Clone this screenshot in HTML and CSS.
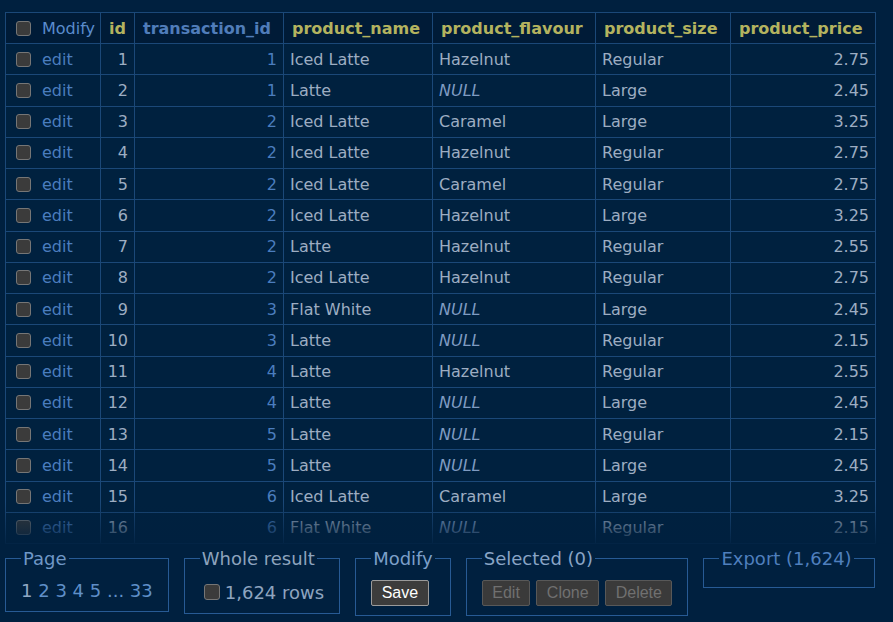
FILE: index.html
```html
<!DOCTYPE html>
<html>
<head>
<meta charset="utf-8">
<link rel="stylesheet" href="styles.css">
</head>
<body>
<div class="page">
  <div class="grid-wrap">
    <table class="grid">
      <colgroup>
        <col class="c-mod"><col class="c-id"><col class="c-tid"><col class="c-name"><col class="c-flav"><col class="c-size"><col class="c-price">
      </colgroup>
      <thead>
        <tr>
          <th class="h-mod"><span class="cb"></span>Modify</th>
          <th class="h-sort">id</th>
          <th class="h-link">transaction_id</th>
          <th class="h-sort">product_name</th>
          <th class="h-sort">product_flavour</th>
          <th class="h-sort">product_size</th>
          <th class="h-sort">product_price</th>
        </tr>
      </thead>
      <tbody>
        <tr><td class="mod"><span class="cb"></span><span class="lnk">edit</span></td><td class="num">1</td><td class="num lnk">1</td><td>Iced Latte</td><td>Hazelnut</td><td>Regular</td><td class="num">2.75</td></tr>
        <tr><td class="mod"><span class="cb"></span><span class="lnk">edit</span></td><td class="num">2</td><td class="num lnk">1</td><td>Latte</td><td class="null">NULL</td><td>Large</td><td class="num">2.45</td></tr>
        <tr><td class="mod"><span class="cb"></span><span class="lnk">edit</span></td><td class="num">3</td><td class="num lnk">2</td><td>Iced Latte</td><td>Caramel</td><td>Large</td><td class="num">3.25</td></tr>
        <tr><td class="mod"><span class="cb"></span><span class="lnk">edit</span></td><td class="num">4</td><td class="num lnk">2</td><td>Iced Latte</td><td>Hazelnut</td><td>Regular</td><td class="num">2.75</td></tr>
        <tr><td class="mod"><span class="cb"></span><span class="lnk">edit</span></td><td class="num">5</td><td class="num lnk">2</td><td>Iced Latte</td><td>Caramel</td><td>Regular</td><td class="num">2.75</td></tr>
        <tr><td class="mod"><span class="cb"></span><span class="lnk">edit</span></td><td class="num">6</td><td class="num lnk">2</td><td>Iced Latte</td><td>Hazelnut</td><td>Large</td><td class="num">3.25</td></tr>
        <tr><td class="mod"><span class="cb"></span><span class="lnk">edit</span></td><td class="num">7</td><td class="num lnk">2</td><td>Latte</td><td>Hazelnut</td><td>Regular</td><td class="num">2.55</td></tr>
        <tr><td class="mod"><span class="cb"></span><span class="lnk">edit</span></td><td class="num">8</td><td class="num lnk">2</td><td>Iced Latte</td><td>Hazelnut</td><td>Regular</td><td class="num">2.75</td></tr>
        <tr><td class="mod"><span class="cb"></span><span class="lnk">edit</span></td><td class="num">9</td><td class="num lnk">3</td><td>Flat White</td><td class="null">NULL</td><td>Large</td><td class="num">2.45</td></tr>
        <tr><td class="mod"><span class="cb"></span><span class="lnk">edit</span></td><td class="num">10</td><td class="num lnk">3</td><td>Latte</td><td class="null">NULL</td><td>Regular</td><td class="num">2.15</td></tr>
        <tr><td class="mod"><span class="cb"></span><span class="lnk">edit</span></td><td class="num">11</td><td class="num lnk">4</td><td>Latte</td><td>Hazelnut</td><td>Regular</td><td class="num">2.55</td></tr>
        <tr><td class="mod"><span class="cb"></span><span class="lnk">edit</span></td><td class="num">12</td><td class="num lnk">4</td><td>Latte</td><td class="null">NULL</td><td>Large</td><td class="num">2.45</td></tr>
        <tr><td class="mod"><span class="cb"></span><span class="lnk">edit</span></td><td class="num">13</td><td class="num lnk">5</td><td>Latte</td><td class="null">NULL</td><td>Regular</td><td class="num">2.15</td></tr>
        <tr><td class="mod"><span class="cb"></span><span class="lnk">edit</span></td><td class="num">14</td><td class="num lnk">5</td><td>Latte</td><td class="null">NULL</td><td>Large</td><td class="num">2.45</td></tr>
        <tr><td class="mod"><span class="cb"></span><span class="lnk">edit</span></td><td class="num">15</td><td class="num lnk">6</td><td>Iced Latte</td><td>Caramel</td><td>Large</td><td class="num">3.25</td></tr>
        <tr><td class="mod"><span class="cb"></span><span class="lnk">edit</span></td><td class="num">16</td><td class="num lnk">6</td><td>Flat White</td><td class="null">NULL</td><td>Regular</td><td class="num">2.15</td></tr>
      </tbody>
    </table>
    <div class="fade"></div>
  </div>

  <div class="actions">
    <fieldset class="box">
      <legend class="lg-page">Page</legend>
      <div class="pages"><span class="cur">1</span> <span class="pl">2</span> <span class="pl">3</span> <span class="pl">4</span> <span class="pl">5</span> <span class="pl">...</span> <span class="pl">33</span></div>
    </fieldset>
    <fieldset class="box">
      <legend class="lg-whole">Whole result</legend>
      <div class="whole"><span class="cb cb-big"></span><span>1,624 rows</span></div>
    </fieldset>
    <fieldset class="box">
      <legend class="lg-mod">Modify</legend>
      <div class="btns"><button class="btn btn-save">Save</button></div>
    </fieldset>
    <fieldset class="box">
      <legend class="lg-sel">Selected (0)</legend>
      <div class="btns"><button class="btn btn-off">Edit</button><button class="btn btn-off">Clone</button><button class="btn btn-off">Delete</button></div>
    </fieldset>
    <fieldset class="box box-empty">
      <legend class="lg-exp">Export (1,624)</legend>
    </fieldset>
  </div>
</div>
</body>
</html>
```
FILE: styles.css
```css
html, body {
  margin: 0;
  padding: 0;
  background: #00203f;
}
body {
  font-family: "DejaVu Sans", Verdana, sans-serif;
  color: #9dadc2;
}
.page {
  padding: 12px 0 0 5px;
  width: 888px;
}
.grid-wrap {
  position: relative;
  height: 534px;
  overflow: hidden;
}
.grid {
  border-collapse: collapse;
  table-layout: fixed;
  width: 870px;
  font-size: 16px;
}
.c-mod { width: 95px; }
.c-id { width: 34px; }
.c-tid { width: 149px; }
.c-name { width: 149px; }
.c-flav { width: 163px; }
.c-size { width: 135px; }
.c-price { width: 145px; }

.grid th, .grid td {
  border: 1px solid #1b4878;
  white-space: nowrap;
  overflow: hidden;
}
.grid thead tr { height: 31px; }
.grid tbody tr { height: 31.25px; }
.grid th {
  background: #001b37;
  text-align: left;
  padding: 0 8px;
  font-weight: bold;
}
.grid td {
  background: #00213f;
  padding: 0 6px;
}
.grid th.h-mod {
  font-weight: normal;
  color: #5a8ccd;
  padding: 0 6px;
}
.h-sort { color: #b4b35f; }
.h-link { color: #507dba; }
.grid td.mod { padding: 0 6px; }
.num { text-align: right; }
.lnk { color: #4b7dbe; }
.null { font-style: italic; color: #7f9bc2; }

.cb {
  display: inline-block;
  width: 13px;
  height: 13px;
  border: 1px solid #767676;
  border-radius: 3px;
  background: #3b3b3b;
  vertical-align: -2px;
  margin: 0 11px 0 4px;
}
.fade {
  position: absolute;
  left: 0;
  right: 0;
  bottom: 0;
  height: 44px;
  background: linear-gradient(to bottom, rgba(0,32,63,0) 0%, rgba(0,32,63,0.5) 55%, rgba(0,32,63,0.95) 100%);
}

.actions {
  display: flex;
  align-items: flex-start;
  gap: 15px;
  margin-top: 2px;
}
.box {
  margin: 0;
  border: 1px solid #275a94;
  padding: 11px 15px 9px;
  font-size: 18px;
  min-width: 0;
}
.box legend {
  padding: 0 2px;
  line-height: 21px;
}
.lg-page { color: #6f97c6; }
.lg-whole { color: #8da3bd; }
.lg-mod { color: #7c9fc8; }
.lg-sel { color: #89a5c6; }
.lg-exp { color: #4f7fbd; }
.box-empty { padding: 9px 20px 9px 15px; }

.pages {
  line-height: 22px;
  white-space: nowrap;
}
.cur { color: #90a8c4; }
.pl { color: #5f8fc8; }

.whole {
  display: flex;
  align-items: center;
  height: 24px;
  color: #8ea4bf;
  white-space: nowrap;
}
.cb-big {
  width: 14px;
  height: 14px;
  margin: 0 5px 0 4px;
}
.btns {
  display: flex;
  gap: 6px;
}
.btn {
  font-family: "Liberation Sans", Arial, sans-serif;
  font-size: 16px;
  height: 26px;
  padding: 0 9.5px;
  border-radius: 2px;
  margin: 0;
}
.btn-save {
  background: #3c3c3c;
  border: 1px solid #9a9a9a;
  color: #ffffff;
}
.btn-off {
  background: #3a3a3a;
  border: 1px solid #585858;
  color: #707070;
}
```
